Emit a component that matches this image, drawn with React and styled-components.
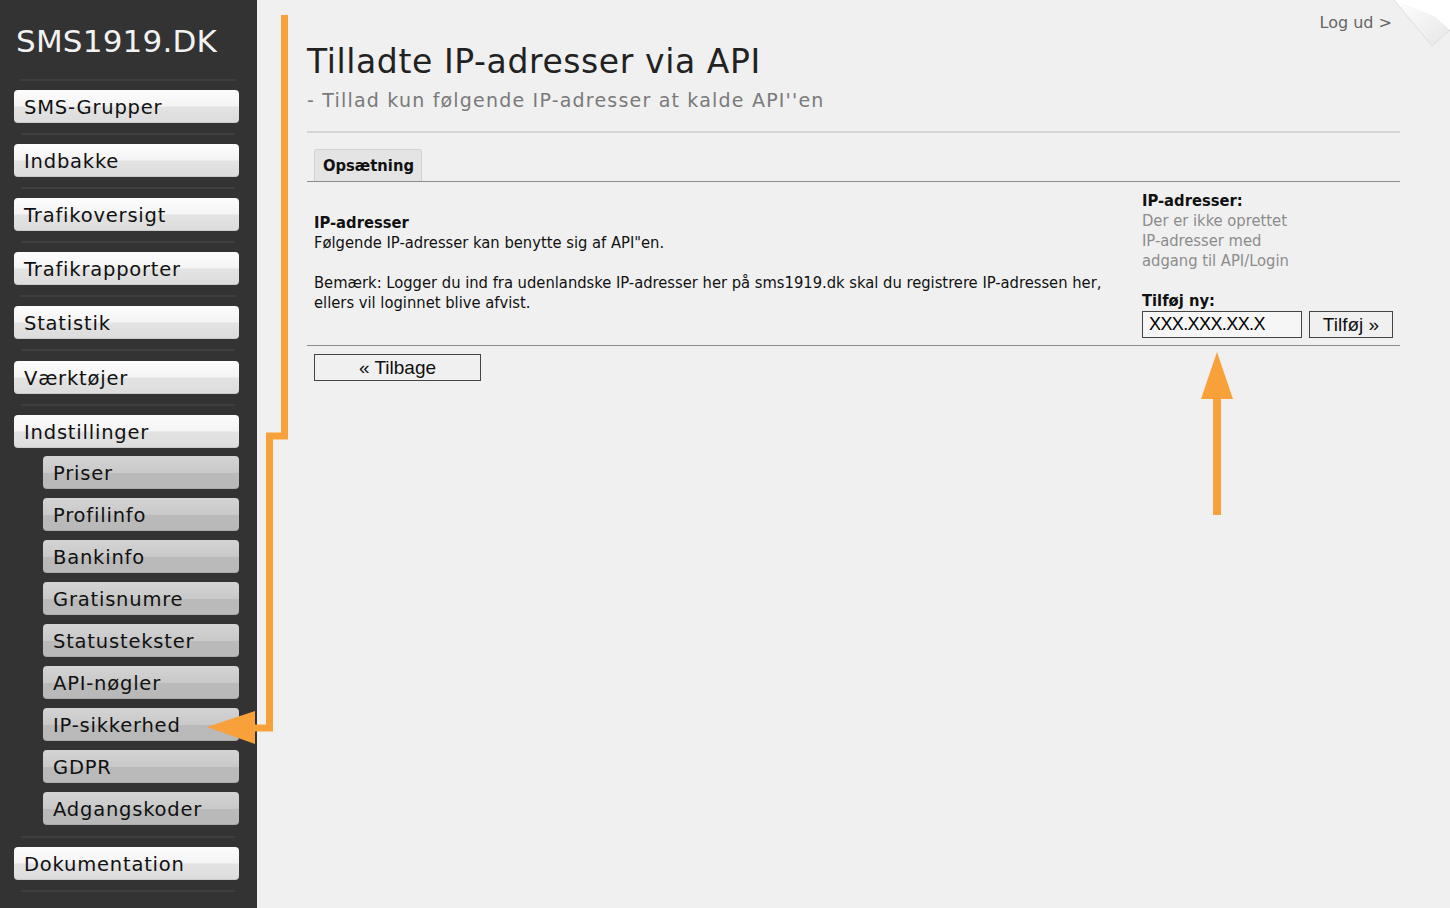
import React from 'react';
import styled, { createGlobalStyle } from 'styled-components';

const ORANGE = '#f8a13a';
const HEAD_FONT = '"DejaVu Sans", "Liberation Sans", sans-serif';
const BODY_FONT = '"DejaVu Sans Condensed", "DejaVu Sans", sans-serif';

const GlobalStyle = createGlobalStyle`
  html, body {
    margin: 0;
    padding: 0;
    background: #f0f0f0;
  }
  * { box-sizing: border-box; }
`;

const topMenu = ['SMS-Grupper', 'Indbakke', 'Trafikoversigt', 'Trafikrapporter', 'Statistik', 'Værktøjer'];
const subMenu = ['Priser', 'Profilinfo', 'Bankinfo', 'Gratisnumre', 'Statustekster', 'API-nøgler', 'IP-sikkerhed', 'GDPR', 'Adgangskoder'];

const App = () => {
    return (
        <Page>
            <GlobalStyle />
            <Sidebar>
                <Logo>SMS1919.DK</Logo>
                <Divider />
                {topMenu.map((item) => (
                    <React.Fragment key={item}>
                        <MenuButton>{item}</MenuButton>
                        <Divider />
                    </React.Fragment>
                ))}
                <MenuButton>Indstillinger</MenuButton>
                <SubList>
                    {subMenu.map((item) => (
                        <MenuButton sub key={item}>{item}</MenuButton>
                    ))}
                </SubList>
                <Divider />
                <MenuButton>Dokumentation</MenuButton>
                <Divider />
            </Sidebar>

            <Main>
                <Header>
                    <div>
                        <Title>Tilladte IP-adresser via API</Title>
                        <Subtitle>- Tillad kun følgende IP-adresser at kalde API''en</Subtitle>
                    </div>
                    <LogOut>Log ud &gt;</LogOut>
                </Header>

                <Tabs>
                    <Tab>Opsætning</Tab>
                </Tabs>

                <Panel>
                    <InfoText>
                        <b>IP-adresser</b><br />
                        Følgende IP-adresser kan benytte sig af API"en.<br />
                        <br />
                        Bemærk: Logger du ind fra udenlandske IP-adresser her på sms1919.dk skal du registrere IP-adressen her,<br />
                        ellers vil loginnet blive afvist.
                    </InfoText>
                    <SideBox>
                        <Label>IP-adresser:</Label>
                        <Muted>Der er ikke oprettet<br />IP-adresser med<br />adgang til API/Login</Muted>
                        <Label>Tilføj ny:</Label>
                        <AddRow>
                            <IpInput defaultValue="XXX.XXX.XX.X" />
                            <PlainButton width="84px">Tilføj »</PlainButton>
                        </AddRow>
                    </SideBox>
                </Panel>

                <Footer>
                    <PlainButton width="167px">« Tilbage</PlainButton>
                </Footer>
            </Main>

            <Curl viewBox="0 0 56 48" aria-hidden="true">
                <defs>
                    <linearGradient id="curlg" x1="0" y1="0" x2="1" y2="1">
                        <stop offset="0" stopColor="#ffffff" />
                        <stop offset="1" stopColor="#e6e6e6" />
                    </linearGradient>
                </defs>
                <polygon points="0,0 56,0 56,30 38,46" fill="#ffffff" />
                <polygon points="0,0 38,46 56,30 40,16" fill="url(#curlg)" />
                <polyline points="0,0 38,46 56,30" fill="none" stroke="#dcdcdc" strokeWidth="1" />
            </Curl>

            <Arrows viewBox="0 0 1450 908" aria-hidden="true">
                <polyline
                    points="284.5,15 284.5,436 269.5,436 269.5,728 254,728"
                    fill="none"
                    stroke={ORANGE}
                    strokeWidth="7"
                    strokeLinejoin="miter"
                />
                <polygon points="207,727 255,711 255,744" fill={ORANGE} />
                <rect x="1213" y="396" width="8" height="119" fill={ORANGE} />
                <polygon points="1217,352 1233,399 1201,399" fill={ORANGE} />
            </Arrows>
        </Page>
    );
};

// STYLES -------------

const Page = styled.div`
    position: relative;
    display: flex;
    min-height: 908px;
    overflow: hidden;
    background: #f0f0f0;
`;

const Sidebar = styled.nav`
    width: 257px;
    flex-shrink: 0;
    background: #333333;
    padding: 0 18px 20px 14px;
    display: flex;
    flex-direction: column;
`;

const Logo = styled.div`
    font-family: ${HEAD_FONT};
    font-size: 31px;
    letter-spacing: 0.2px;
    color: #f2f2f2;
    padding: 23px 0 0 2px;
    height: 79px;
`;

const Divider = styled.div`
    height: 2px;
    margin: 0 4px 9.1px 7px;
    background: #3f3f3f;
    flex-shrink: 0;
`;

const MenuButton = styled.div`
    height: 33px;
    margin-bottom: ${(p) => (p.sub ? '9px' : '10px')};
    margin-left: ${(p) => (p.sub ? '29px' : '0')};
    padding: 6px 10px 0;
    border-radius: 4px;
    font-family: ${HEAD_FONT};
    font-size: 19.5px;
    letter-spacing: 0.8px;
    color: #111;
    background: ${(p) =>
        p.sub
            ? 'linear-gradient(to bottom, #d4d4d4 0%, #c9c9c9 50%, #bababa 52%, #b9b9b9 100%)'
            : 'linear-gradient(to bottom, #fdfdfd 0%, #f4f4f4 48%, #e3e3e3 52%, #dcdcdc 100%)'};
    box-shadow: inset 0 -1px 0 rgba(0, 0, 0, 0.08);
    white-space: nowrap;
`;

const SubList = styled.div`
    display: flex;
    flex-direction: column;
    margin-top: -2px;
    margin-bottom: 2px;
`;

const Main = styled.main`
    flex: 1;
    padding: 0 50px 0 50px;
    font-family: ${BODY_FONT};
    font-size: 16.4px;
    color: #111;
`;

const Header = styled.header`
    display: flex;
    justify-content: space-between;
    align-items: flex-start;
    border-bottom: 2px solid #d6d6d6;
    padding-bottom: 20px;
`;

const Title = styled.h1`
    margin: 38px 0 0 0;
    font-family: ${HEAD_FONT};
    font-weight: normal;
    font-size: 33px;
    letter-spacing: 0.6px;
    color: #222;
    line-height: 48px;
`;

const Subtitle = styled.div`
    font-family: ${HEAD_FONT};
    font-size: 19px;
    letter-spacing: 1.2px;
    color: #7a7a7a;
    margin-top: 3px;
`;

const LogOut = styled.div`
    margin-top: 13px;
    margin-right: 8px;
    font-family: ${HEAD_FONT};
    font-size: 16px;
    color: #666;
`;

const Tabs = styled.div`
    display: flex;
    padding: 16px 0 0 7px;
    border-bottom: 1px solid #8a8a8a;
`;

const Tab = styled.div`
    width: 108px;
    height: 32px;
    padding: 6px 0 0 8px;
    font-weight: bold;
    font-size: 16.4px;
    background: #e4e4e4;
    border: 1px solid #d2d2d2;
    border-bottom: none;
    border-radius: 3px 3px 0 0;
`;

const Panel = styled.section`
    display: flex;
    justify-content: space-between;
    padding: 9px 7px 7px 7px;
    border-bottom: 1px solid #8a8a8a;
    line-height: 20px;
`;

const InfoText = styled.div`
    padding-top: 22px;
    white-space: nowrap;
`;

const SideBox = styled.div`
    width: 251px;
`;

const Label = styled.div`
    font-weight: bold;
    height: 20px;
`;

const Muted = styled.div`
    color: #8c8c8c;
    margin-bottom: 20px;
`;

const AddRow = styled.div`
    display: flex;
    gap: 7px;
`;

const IpInput = styled.input`
    width: 160px;
    height: 27px;
    padding: 0 6px;
    border: 1px solid #444;
    background: #f6f6f6;
    font-family: "Liberation Sans", sans-serif;
    font-size: 18px;
    letter-spacing: -0.6px;
    color: #000;
    outline: none;
`;

const PlainButton = styled.button`
    width: ${(p) => p.width};
    height: 27px;
    padding: 0;
    border: 1px solid #444;
    background: #f0f0f0;
    font-family: "Liberation Sans", sans-serif;
    font-size: 19px;
    letter-spacing: 0;
    color: #111;
`;

const Footer = styled.div`
    padding: 8px 7px;
`;

const Curl = styled.svg`
    position: absolute;
    top: 0;
    right: 0;
    width: 56px;
    height: 48px;
`;

const Arrows = styled.svg`
    position: absolute;
    left: 0;
    top: 0;
    width: 1450px;
    height: 908px;
    pointer-events: none;
`;

export default App;
